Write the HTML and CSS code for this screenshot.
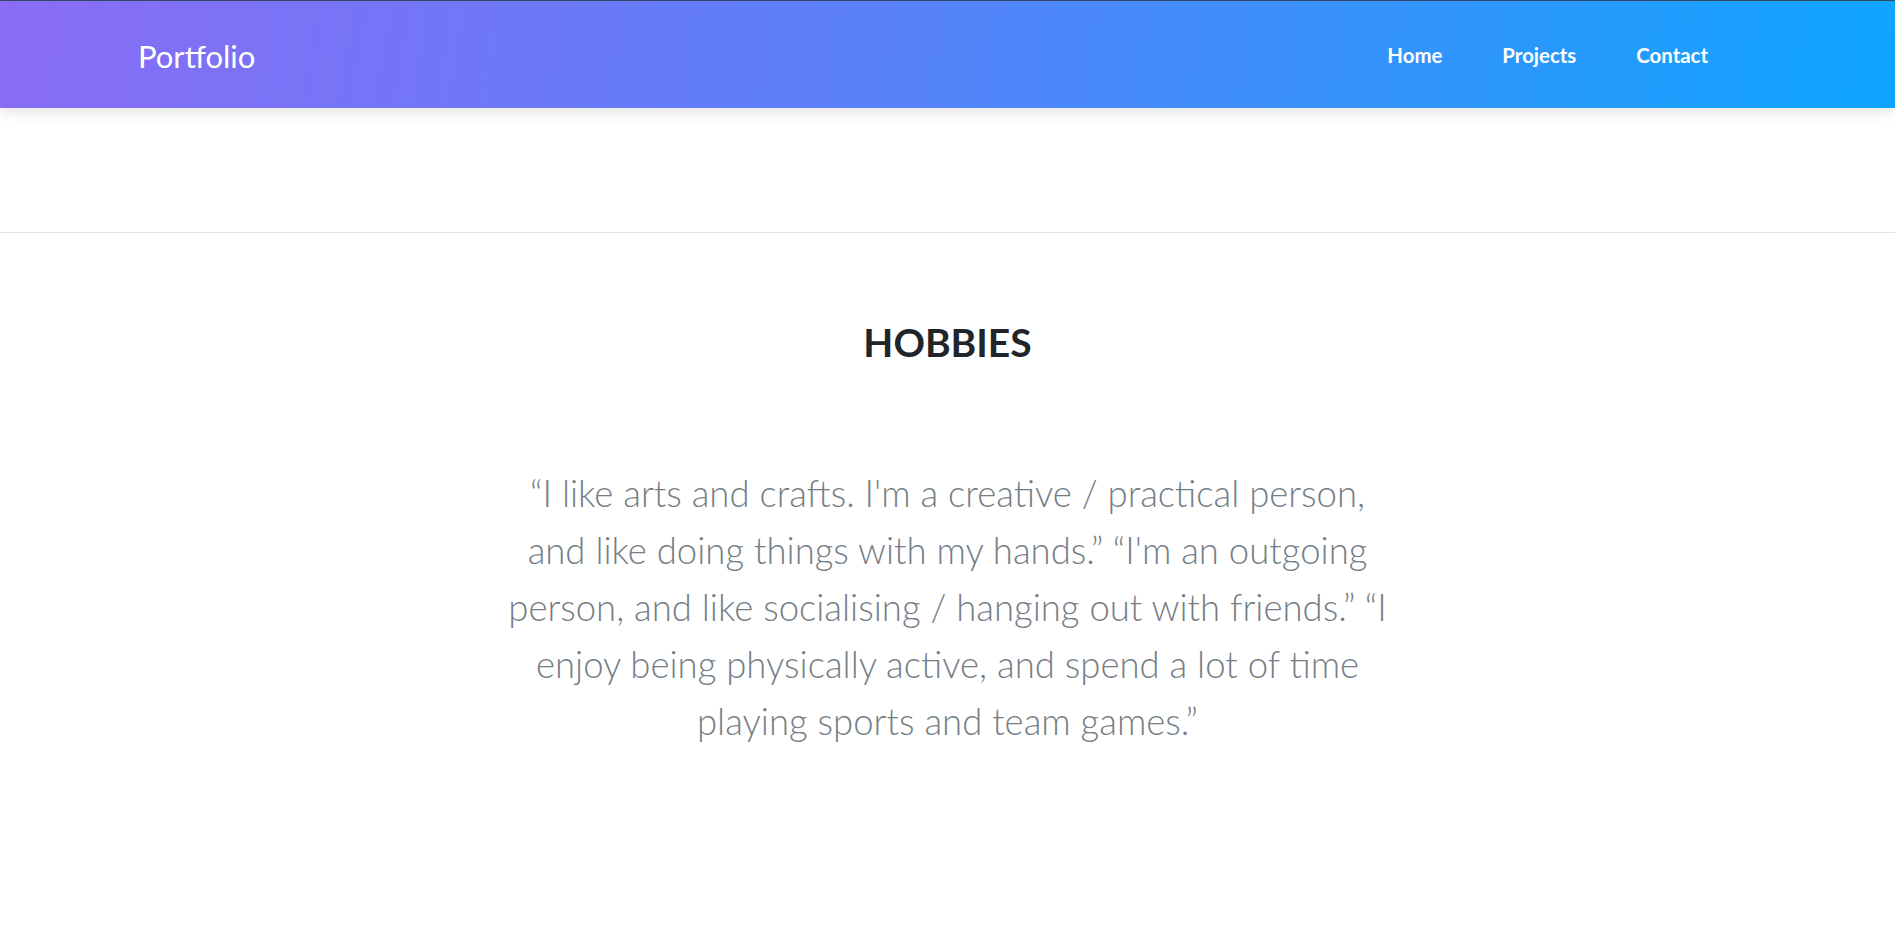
FILE: index.html
```html
<!DOCTYPE html>
<html lang="en">
<head>
<meta charset="utf-8">
<title>Portfolio</title>
<link rel="stylesheet" href="styles.css">
</head>
<body>
<header class="navbar">
  <a class="brand" href="#">Portfolio</a>
  <nav class="nav">
    <a class="nav-link" href="#">Home</a>
    <a class="nav-link" href="#">Projects</a>
    <a class="nav-link" href="#">Contact</a>
  </nav>
</header>
<section class="intro"></section>
<section class="hobbies">
  <h2 class="hobbies-title">HOBBIES</h2>
  <p class="hobbies-text">“I like arts and crafts. I'm a creative / practical person, and like doing things with my hands.” “I'm an outgoing person, and like socialising / hanging out with friends.” “I enjoy being physically active, and spend a lot of time playing sports and team games.”</p>
</section>
</body>
</html>
```
FILE: styles.css
```css
* { box-sizing: border-box; }
body {
  margin: 0;
  font-family: Lato, "Noto Sans", sans-serif;
  background: #fff;
  color: #212529;
}
.navbar {
  position: relative;
  z-index: 2;
  height: 108px;
  border-top: 1px solid #34495e;
  background: linear-gradient(100deg, #8a6cf5 0%, #5b80f8 45%, #0ea5ff 100%);
  display: flex;
  align-items: center;
  justify-content: space-between;
  padding: 0 157px 0 138px;
  box-shadow: 0 3px 14px rgba(0, 0, 0, 0.12);
}
.brand {
  color: #fff;
  text-decoration: none;
  font-size: 31px;
  font-weight: 400;
  margin-top: 2px;
}
.nav {
  display: flex;
}
.nav-link {
  color: #fff;
  text-decoration: none;
  font-size: 20.4px;
  font-weight: 700;
  padding: 0 30px;
}
.intro {
  height: 125px;
  border-bottom: 1px solid #dee2e6;
}
.hobbies {
  padding: 86px 0 120px;
  text-align: center;
}
.hobbies-title {
  margin: 0;
  font-size: 39px;
  font-weight: 700;
  color: #212529;
  line-height: 1.2;
}
.hobbies-text {
  width: 900px;
  margin: 99px auto 0;
  font-family: "Lato Light", Lato, "Noto Sans", sans-serif;
  font-size: 36.5px;
  font-weight: 300;
  line-height: 57px;
  color: #757e86;
}
```
